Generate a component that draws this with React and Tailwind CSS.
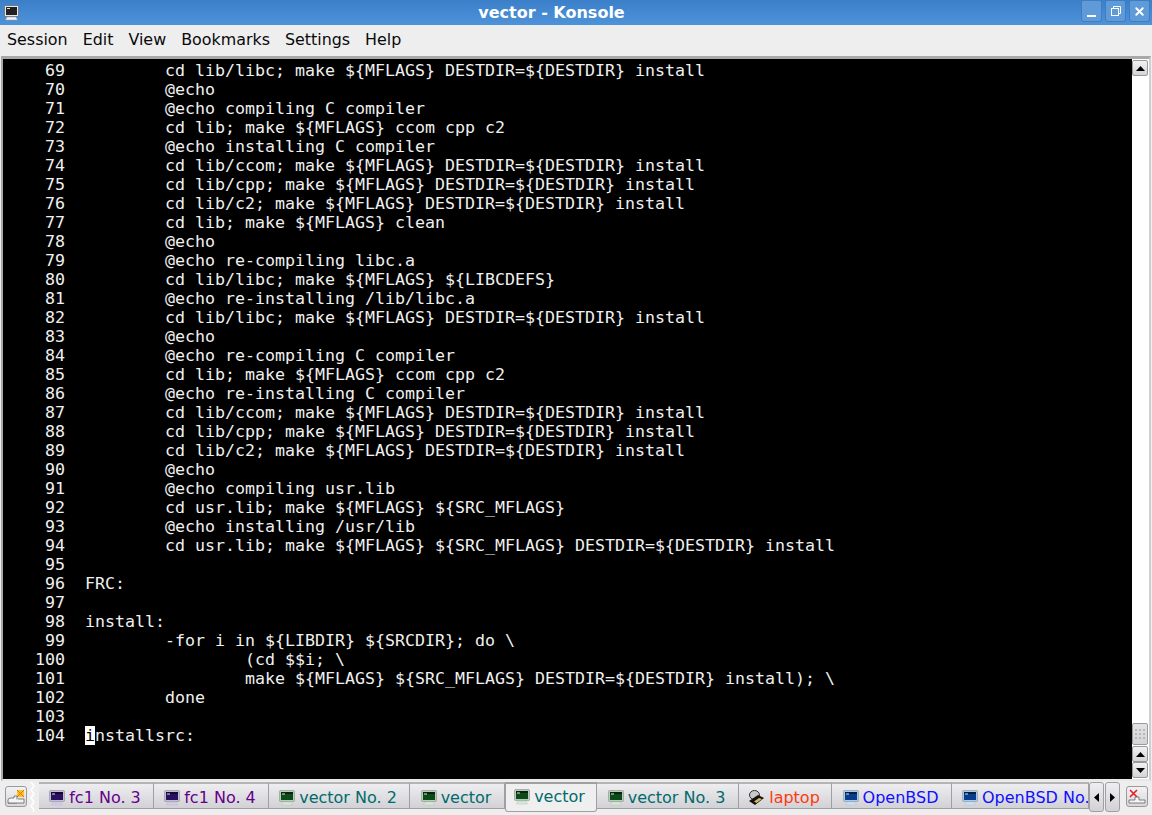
import React from 'react';
import { X } from 'lucide-react';

const terminalLines = [
  `        cd lib/libc; make \${MFLAGS} DESTDIR=\${DESTDIR} install`,
  `        @echo`,
  `        @echo compiling C compiler`,
  `        cd lib; make \${MFLAGS} ccom cpp c2`,
  `        @echo installing C compiler`,
  `        cd lib/ccom; make \${MFLAGS} DESTDIR=\${DESTDIR} install`,
  `        cd lib/cpp; make \${MFLAGS} DESTDIR=\${DESTDIR} install`,
  `        cd lib/c2; make \${MFLAGS} DESTDIR=\${DESTDIR} install`,
  `        cd lib; make \${MFLAGS} clean`,
  `        @echo`,
  `        @echo re-compiling libc.a`,
  `        cd lib/libc; make \${MFLAGS} \${LIBCDEFS}`,
  `        @echo re-installing /lib/libc.a`,
  `        cd lib/libc; make \${MFLAGS} DESTDIR=\${DESTDIR} install`,
  `        @echo`,
  `        @echo re-compiling C compiler`,
  `        cd lib; make \${MFLAGS} ccom cpp c2`,
  `        @echo re-installing C compiler`,
  `        cd lib/ccom; make \${MFLAGS} DESTDIR=\${DESTDIR} install`,
  `        cd lib/cpp; make \${MFLAGS} DESTDIR=\${DESTDIR} install`,
  `        cd lib/c2; make \${MFLAGS} DESTDIR=\${DESTDIR} install`,
  `        @echo`,
  `        @echo compiling usr.lib`,
  `        cd usr.lib; make \${MFLAGS} \${SRC_MFLAGS}`,
  `        @echo installing /usr/lib`,
  `        cd usr.lib; make \${MFLAGS} \${SRC_MFLAGS} DESTDIR=\${DESTDIR} install`,
  ``,
  `FRC:`,
  ``,
  `install:`,
  `        -for i in \${LIBDIR} \${SRCDIR}; do \\`,
  `                (cd $$i; \\`,
  `                make \${MFLAGS} \${SRC_MFLAGS} DESTDIR=\${DESTDIR} install); \\`,
  `        done`,
  ``,
];

const purple = { screen: '#2a1060', stand: '#d8c8ec', frame: '#c4bcd4' };
const green = { screen: '#0c4a18', stand: '#d4ecd0', frame: '#b8ccb8' };
const blue = { screen: '#083c8c', stand: '#c8e4f8', frame: '#a8cce8' };

const tabs = [
  { label: 'fc1 No. 3', w: 'w-[115px]', text: 'text-[#66008a]', colors: purple },
  { label: 'fc1 No. 4', w: 'w-[115px]', text: 'text-[#66008a]', colors: purple },
  { label: 'vector No. 2', w: 'w-[141px]', text: 'text-[#006b6b]', colors: green },
  { label: 'vector', w: 'w-[95px]', text: 'text-[#006b6b]', colors: green },
  { label: 'vector', w: 'w-[92px]', text: 'text-[#006b6b]', colors: green, active: true },
  { label: 'vector No. 3', w: 'w-[142px]', text: 'text-[#006b6b]', colors: green },
  { label: 'laptop', w: 'w-[93px]', text: 'text-[#ff3a10]', laptop: true },
  { label: 'OpenBSD', w: 'w-[120px]', text: 'text-[#1010ff]', colors: blue },
  { label: 'OpenBSD No.', w: 'w-[137px]', text: 'text-[#1010ff]', colors: blue, clip: true },
];

const MonitorIcon = ({ colors }) => (
  <svg width="16" height="16" viewBox="0 0 16 16" className="shrink-0">
    <rect x="0.5" y="0.5" width="15" height="11" rx="1" fill={colors.frame} stroke="#8a9296" strokeWidth="0.6" />
    <rect x="2" y="2" width="12" height="8" fill={colors.screen} />
    <rect x="2" y="2" width="12" height="2" fill="#000" opacity="0.5" />
    <rect x="3" y="3.5" width="3" height="1" fill="#d8e8e8" />
    <path d="M4 12h8l1.5 3h-11z" fill={colors.stand} stroke="#b8bec2" strokeWidth="0.5" />
  </svg>
);

const LaptopIcon = () => (
  <svg width="17" height="16" viewBox="0 0 17 16" className="shrink-0">
    <ellipse cx="6.5" cy="5" rx="5" ry="4.5" fill="#c8c8c8" stroke="#333" strokeWidth="1" />
    <path d="M1 11 L10 5 L16 8 L7 15 Z" fill="#111" />
    <path d="M6 11.5 L11 8 L14 9 L8.5 13 Z" fill="#d8b860" />
  </svg>
);

const Arrow = ({ dir }) => {
  const pts = {
    up: '0,5 9,5 4.5,0',
    down: '0,0 9,0 4.5,5',
    left: '5,0 5,9 0,4.5',
    right: '0,0 0,9 5,4.5',
  };
  const vertical = dir === 'up' || dir === 'down';
  return (
    <svg width={vertical ? 9 : 5} height={vertical ? 5 : 9} viewBox={vertical ? '0 0 9 5' : '0 0 5 9'}>
      <polygon points={pts[dir]} fill="#000" />
    </svg>
  );
};

const ScrollButton = ({ dir, className = '' }) => (
  <div className={`w-[16px] h-[16px] bg-gradient-to-b from-[#f2f2f4] to-[#d4d4d8] border border-[#9a9a9e] rounded-[2px] flex items-center justify-center ${className}`}>
    <Arrow dir={dir} />
  </div>
);

const TitleButton = ({ children }) => (
  <div className="w-[21px] h-[22px] rounded-b-[3px] rounded-t-[2px] bg-[#5f9bd8] border border-[#3f7cc0] flex items-center justify-center">
    {children}
  </div>
);

const Tab = ({ tab }) => (
  <div
    className={`${tab.w} shrink-0 flex items-center gap-[4px] overflow-hidden text-[16px] ${tab.clip ? 'justify-start pl-[10px]' : 'justify-center'} ${tab.active
      ? 'h-[30px] pb-[2px] pr-[3px] bg-[#efeff0] border border-t-2 border-[#a0a0a4] rounded-b-[3px]'
      : `h-[27px] pt-[3px] ${tab.clip ? '' : 'pr-[2px]'} bg-gradient-to-b from-[#eeeef1] to-[#d2d2d6] border-r border-b border-t-2 border-[#a0a0a4] border-t-[#b4b4b8]`
      }`}
  >
    {tab.laptop ? <LaptopIcon /> : <MonitorIcon colors={tab.colors} />}
    <span className={`${tab.text} whitespace-nowrap`}>{tab.label}</span>
  </div>
);

const App = () => {
  return (
    <div className="w-[1152px] h-[815px] overflow-hidden bg-[#eeeeee] flex flex-col font-['DejaVu_Sans',sans-serif] text-[15.9px]">
      {/* Title bar */}
      <div className="h-[25px] shrink-0 bg-gradient-to-b from-[#3a7fc8] to-[#4e93da] flex items-center relative">
        <div className="pl-[4px] pt-[1px] shrink-0">
          <svg width="15" height="17" viewBox="0 0 15 17">
            <rect x="0.5" y="0.5" width="14" height="11" rx="1" fill="#e8e8e8" stroke="#555" strokeWidth="0.6" />
            <rect x="2" y="2" width="11" height="8" fill="#222" />
            <rect x="3" y="3" width="3" height="1" fill="#ddd" />
            <path d="M3 12h9l1.5 3h-12z" fill="#f4f4f4" stroke="#999" strokeWidth="0.5" />
          </svg>
        </div>
        <div className="flex-1 text-center text-white font-bold text-[16px] pr-[68px]">vector - Konsole</div>
        <div className="absolute right-[2px] top-0 flex gap-[3px]">
          <TitleButton>
            <div className="w-[9px] h-[2px] bg-white mt-[9px]" />
          </TitleButton>
          <TitleButton>
            <svg width="10" height="10" viewBox="0 0 10 10" fill="none" stroke="#fff" strokeWidth="1">
              <rect x="0.5" y="2.5" width="7" height="7" />
              <path d="M2.5 2.5V.5h7v7H7.5" />
            </svg>
          </TitleButton>
          <TitleButton><X size={13} color="#fff" strokeWidth={3.5} /></TitleButton>
        </div>
      </div>

      {/* Menu bar */}
      <div className="h-[31px] shrink-0 flex items-center gap-[15px] pl-[7px] pb-[2px] text-[#0a0a0a]">
        {['Session', 'Edit', 'View', 'Bookmarks', 'Settings', 'Help'].map((item) => (
          <span key={item}>{item}</span>
        ))}
      </div>

      {/* Terminal + scrollbar */}
      <div className="h-[725px] shrink-0 mx-[1px] border-2 border-t-[3px] border-[#a8a8a8] border-b-[#e8e8e8] border-r-[#d0d0d0] bg-black flex">
        <div className="flex-1 min-w-0 pl-[2px] pt-[2px] font-['DejaVu_Sans_Mono',monospace] text-[16.62px] leading-[19px] text-[#f0f0f0]">
          {terminalLines.map((line, i) => (
            <pre key={i} className="h-[19px] font-['DejaVu_Sans_Mono',monospace]">
              {String(69 + i).padStart(6, ' ') + '  ' + line}
            </pre>
          ))}
          <pre className="h-[19px] font-['DejaVu_Sans_Mono',monospace]">
            {'   104  '}<span className="bg-white text-black">i</span>nstallsrc:
          </pre>
        </div>
        <div className="w-[17px] shrink-0 bg-white bg-[radial-gradient(#d8d8d8_0.5px,transparent_0.6px)] bg-[length:2px_2px] flex flex-col items-start pt-[1px] pb-[1px]">
          <ScrollButton dir="up" />
          <div className="flex-1" />
          <div className="w-[16px] h-[22px] bg-gradient-to-b from-[#e4e4e6] to-[#d4d4d8] border border-[#9a9a9e] rounded-[2px] flex items-center justify-center">
            <div className="grid grid-cols-3 gap-[2px]">
              {Array.from({ length: 9 }).map((_, i) => (
                <div key={i} className="w-[2px] h-[2px] bg-[#b8b8bc]" />
              ))}
            </div>
          </div>
          <ScrollButton dir="up" className="mt-[1px]" />
          <ScrollButton dir="down" />
        </div>
      </div>

      {/* Tab bar */}
      <div className="flex-1 flex items-start pl-[5px] pt-[5px] min-h-0">
        <div className="w-[22px] h-[21px] shrink-0 bg-gradient-to-b from-[#f2f2f4] to-[#d8d8dc] border border-[#9a9a9e] rounded-[3px] flex items-center justify-center">
          <svg width="18" height="16" viewBox="0 0 18 16">
            <rect x="10" y="1" width="7" height="7" fill="#f8c820" />
            <path d="M10 1l7 7M17 1l-7 7" stroke="#e86a10" strokeWidth="1" />
            <path d="M1 14v-3q0-2 3-2h3v-2h3v7z" fill="#f4f4f4" stroke="#666" strokeWidth="0.8" />
            <path d="M1 14h16v-4h-6" fill="#f4f4f4" stroke="#666" strokeWidth="0.8" />
          </svg>
        </div>
        {/* torn edge in front of the tabs */}
        <div className="w-[12px] shrink-0 -mt-[4px] flex justify-center">
          <svg width="6" height="30" viewBox="0 0 6 30" fill="none" stroke="#fff" strokeWidth="1.5">
            <path d="M1 0l3 4-3 4 3 4-3 4 3 4-3 4 3 4-1 2" />
          </svg>
        </div>
        <div className="flex items-start -mt-[4px]">
          {tabs.map((tab, i) => <Tab key={i} tab={tab} />)}
        </div>
        <div className="flex shrink-0 -mt-[4px] gap-[1px]">
          <div className="w-[15px] h-[30px] bg-gradient-to-b from-[#eeeef1] to-[#d2d2d6] border border-[#a0a0a4] rounded-[3px] flex items-center justify-center"><Arrow dir="left" /></div>
          <div className="w-[15px] h-[30px] bg-gradient-to-b from-[#eeeef1] to-[#d2d2d6] border border-[#a0a0a4] rounded-[3px] flex items-center justify-center"><Arrow dir="right" /></div>
        </div>
        <div className="w-[22px] h-[21px] ml-[6px] shrink-0 bg-gradient-to-b from-[#f2f2f4] to-[#d8d8dc] border border-[#9a9a9e] rounded-[3px] flex items-center justify-center">
          <svg width="18" height="16" viewBox="0 0 18 16">
            <path d="M2 1l7 7M9 1l-7 7" stroke="#e02020" strokeWidth="1.6" />
            <path d="M1 14h16v-3h-6v-3h-4v3h-6z" fill="#f4f4f4" stroke="#666" strokeWidth="0.8" />
          </svg>
        </div>
      </div>
    </div>
  );
};

export default App;
